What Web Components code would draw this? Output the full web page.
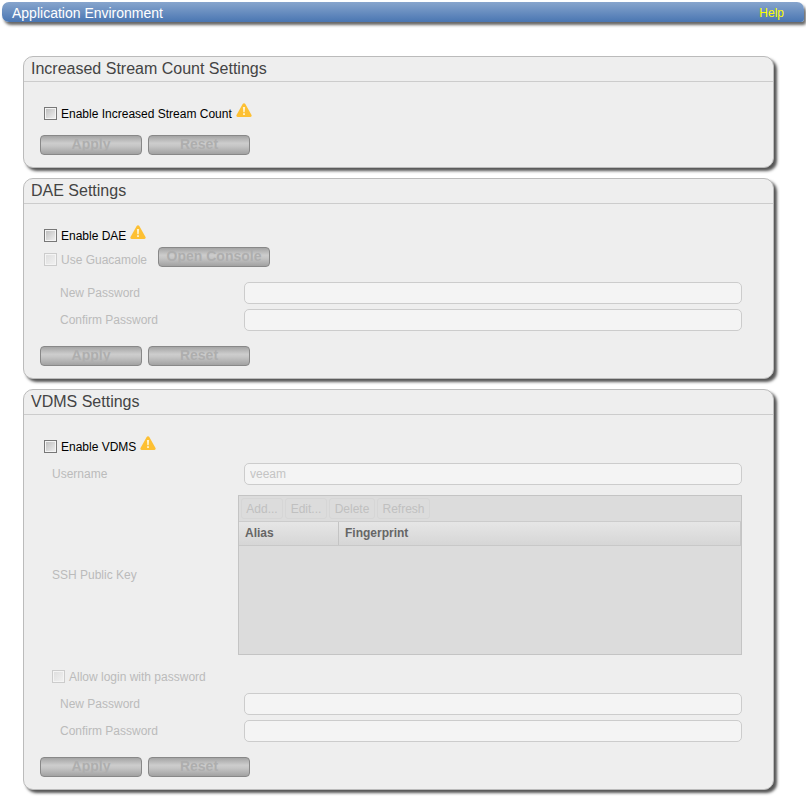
<!DOCTYPE html>
<html>
<head>
<meta charset="utf-8">
<title>Application Environment</title>
<style>
  html, body { margin: 0; background: #fff; }
  body { font: 12px "Liberation Sans", Arial, sans-serif; color: #000; }
  .panels { display: flex; flex-direction: column; gap: 10px; width: 751px; margin: 34px 0 0 23px; padding-bottom: 9px; }
</style>
</head>
<body>
<app-header title-text="Application Environment">Help</app-header>
<div class="panels">
  <settings-panel heading="Increased Stream Count Settings">
    <check-row warn>Enable Increased Stream Count</check-row>
    <button-row style="--top: 15px"></button-row>
  </settings-panel>

  <settings-panel heading="DAE Settings">
    <check-row warn>Enable DAE</check-row>
    <div style="display:flex;align-items:flex-start;margin-top:5px;height:20px">
      <check-row disabled style="margin-top:6px">Use Guacamole</check-row>
      <gray-button width="112" style="margin-left:11px">Open Console</gray-button>
    </div>
    <form-row label="New Password" style="--top: 15px"><text-box></text-box></form-row>
    <form-row label="Confirm Password" style="--top: 5px"><text-box></text-box></form-row>
    <button-row style="--top: 15px"></button-row>
  </settings-panel>

  <settings-panel heading="VDMS Settings">
    <check-row warn>Enable VDMS</check-row>
    <form-row label="Username" style="--top: 10px; --indent: 12px"><text-box value="veeam"></text-box></form-row>
    <form-row label="SSH Public Key" style="--top: 10px; --indent: 12px"><key-table></key-table></form-row>
    <check-row disabled style="--left: 8px; margin-top: 15px">Allow login with password</check-row>
    <form-row label="New Password" style="--top: 10px"><text-box></text-box></form-row>
    <form-row label="Confirm Password" style="--top: 5px"><text-box></text-box></form-row>
    <button-row style="--top: 15px"></button-row>
  </settings-panel>
</div>

<script>
class AppHeader extends HTMLElement {
    constructor() {
        super()
        this.attachShadow({ mode: "open" })
    }
    connectedCallback() {
        this.shadowRoot.innerHTML = `
        <style>
        :host {
            display: flex;
            justify-content: space-between;
            align-items: center;
            box-sizing: border-box;
            height: 20px;
            margin: 2px 2px 0;
            padding: 2px 20px 0 10px;
            color: #fff;
            font-size: 14px;
            border-radius: 7px 7px 3px 7px;
            background: linear-gradient(#87a5cd, #4a76b2);
            box-shadow: 2px 3px 3px #666;
        }
        a { color: #ff0; font-size: 12px; text-decoration: none; }
        </style>
        <span>${this.getAttribute("title-text")}</span>
        <a href="#"><slot></slot></a>
        `
    }
}

class SettingsPanel extends HTMLElement {
    constructor() {
        super()
        this.attachShadow({ mode: "open" })
    }
    connectedCallback() {
        this.shadowRoot.innerHTML = `
        <style>
        :host {
            display: block;
            box-sizing: border-box;
            border: 1px solid #bbb;
            border-radius: 10px;
            background: #eee;
            box-shadow: 3px 3px 3px #555;
        }
        h2 {
            margin: 0;
            box-sizing: border-box;
            height: 25px;
            padding: 2px 7px 0;
            border-bottom: 1px solid #ccc;
            font: 16px/20px "Liberation Sans", Arial, sans-serif;
            color: #444;
        }
        .body { padding: 25px 16px 12px; }
        </style>
        <h2>${this.getAttribute("heading")}</h2>
        <div class="body"><slot></slot></div>
        `
    }
}

class WarnIcon extends HTMLElement {
    constructor() {
        super()
        this.attachShadow({ mode: "open" })
        this.shadowRoot.innerHTML = `
        <style>
        :host { display: inline-block; width: 16px; height: 14px; line-height: 0; }
        </style>
        <svg width="16" height="14" viewBox="0 0 16 14">
            <path d="M8 .3c.6 0 1 .3 1.300.8l6.200 10.900c.5.9-.1 1.900-1.200 1.900H1.700C.6 13.900 0 12.900.5 12L6.700 1.100C7 .6 7.400.3 8 .3z" fill="#fdc033"/>
            <path d="M6.900 4h2.200l-.4 5.200H7.300z" fill="#fff3d0"/>
            <rect x="7.100" y="10.200" width="1.800" height="1.800" fill="#fff3d0"/>
        </svg>
        `
    }
}

class CheckRow extends HTMLElement {
    constructor() {
        super()
        this.attachShadow({ mode: "open" })
    }
    connectedCallback() {
        const off = this.hasAttribute("disabled")
        this.shadowRoot.innerHTML = `
        <style>
        :host {
            display: flex;
            align-items: center;
            height: 13px;
            margin-left: calc(4px + var(--left, 0px));
            color: ${off ? "#bbb" : "#000"};
        }
        input {
            appearance: none;
            box-sizing: border-box;
            width: 13px;
            height: 13px;
            margin: 0 4px 0 0;
            border: 1px solid ${off ? "#ccc" : "#777"};
            background: ${off ? "linear-gradient(135deg, #ddd, #f2f2f2)" : "linear-gradient(135deg, #bbb, #f2f2f2)"};
            box-shadow: inset 0 0 0 1px #f4f4f4;
        }
        warn-icon { margin: -7px 0 0 4px; }
        </style>
        <input type="checkbox" ${off ? "disabled" : ""}>
        <label><slot></slot></label>
        ${this.hasAttribute("warn") ? "<warn-icon></warn-icon>" : ""}
        `
    }
}

class GrayButton extends HTMLElement {
    constructor() {
        super()
        this.attachShadow({ mode: "open" })
    }
    connectedCallback() {
        const width = this.getAttribute("width") || 102
        this.shadowRoot.innerHTML = `
        <style>
        :host { display: inline-block; line-height: normal; }
        button {
            display: block;
            box-sizing: border-box;
            width: ${width}px;
            height: 20px;
            padding: 0 0 2px;
            border: 1px solid #888;
            border-radius: 4px;
            background: linear-gradient(#a4a4a4, #cdcdcd 40%, #c6c6c6 55%, #a2a2a2);
            color: #aeaeae;
            font: bold 14px "Liberation Sans", Arial, sans-serif;
        }
        </style>
        <button disabled><slot></slot></button>
        `
    }
}

class ButtonRow extends HTMLElement {
    constructor() {
        super()
        this.attachShadow({ mode: "open" })
        this.shadowRoot.innerHTML = `
        <style>
        :host { display: flex; gap: 6px; margin-top: var(--top, 0); }
        </style>
        <gray-button>Apply</gray-button>
        <gray-button>Reset</gray-button>
        `
    }
}

class FormRow extends HTMLElement {
    constructor() {
        super()
        this.attachShadow({ mode: "open" })
    }
    connectedCallback() {
        this.shadowRoot.innerHTML = `
        <style>
        :host {
            display: grid;
            grid-template-columns: 204px 498px;
            align-items: center;
            margin-top: var(--top, 0);
            color: #bbb;
        }
        :host([label="SSH Public Key"]) { grid-template-columns: 198px 504px; }
        label { padding-left: var(--indent, 20px); }
        </style>
        <label>${this.getAttribute("label")}</label>
        <slot></slot>
        `
    }
}

class TextBox extends HTMLElement {
    constructor() {
        super()
        this.attachShadow({ mode: "open" })
    }
    connectedCallback() {
        this.shadowRoot.innerHTML = `
        <style>
        :host { display: block; line-height: 0; }
        input {
            display: block;
            box-sizing: border-box;
            width: 100%;
            height: 22px;
            padding: 0 5px;
            margin: 0;
            border: 1px solid #ccc;
            border-radius: 5px;
            background: #f4f4f4;
            font: 12px "Liberation Sans", Arial, sans-serif;
            color: #c4c4c4;
        }
        </style>
        <input type="text" disabled value="${this.getAttribute("value") || ""}">
        `
    }
}

class KeyTable extends HTMLElement {
    constructor() {
        super()
        this.attachShadow({ mode: "open" })
        this.shadowRoot.innerHTML = `
        <style>
        :host {
            display: flex;
            flex-direction: column;
            box-sizing: border-box;
            height: 160px;
            border: 1px solid #c4c4c4;
            background: #dcdcdc;
        }
        .tools {
            display: flex;
            gap: 2px;
            box-sizing: border-box;
            height: 26px;
            padding: 2px;
            border-bottom: 1px solid #ccc;
        }
        .tools span {
            display: flex;
            align-items: center;
            justify-content: center;
            box-sizing: border-box;
            border: 1px solid #d6d6d6;
            border-radius: 3px;
            color: #c0c0c0;
        }
        .head {
            display: grid;
            grid-template-columns: 99px 1fr;
            height: 24px;
            box-sizing: border-box;
            border-bottom: 1px solid #c8c8c8;
            border-right: 1px solid #c8c8c8;
            background: linear-gradient(#e6e6e6, #d6d6d6);
            color: #666;
            font-weight: bold;
            line-height: 22px;
        }
        .head span { padding-left: 6px; }
        .head span + span { border-left: 1px solid #c4c4c4; }
        </style>
        <div class="tools">
            <span style="width:42px">Add...</span>
            <span style="width:42px">Edit...</span>
            <span style="width:46px">Delete</span>
            <span style="width:53px">Refresh</span>
        </div>
        <div class="head"><span>Alias</span><span>Fingerprint</span></div>
        `
    }
}

customElements.define("warn-icon", WarnIcon)
customElements.define("gray-button", GrayButton)
customElements.define("button-row", ButtonRow)
customElements.define("check-row", CheckRow)
customElements.define("text-box", TextBox)
customElements.define("form-row", FormRow)
customElements.define("key-table", KeyTable)
customElements.define("app-header", AppHeader)
customElements.define("settings-panel", SettingsPanel)
</script>
</body>
</html>
